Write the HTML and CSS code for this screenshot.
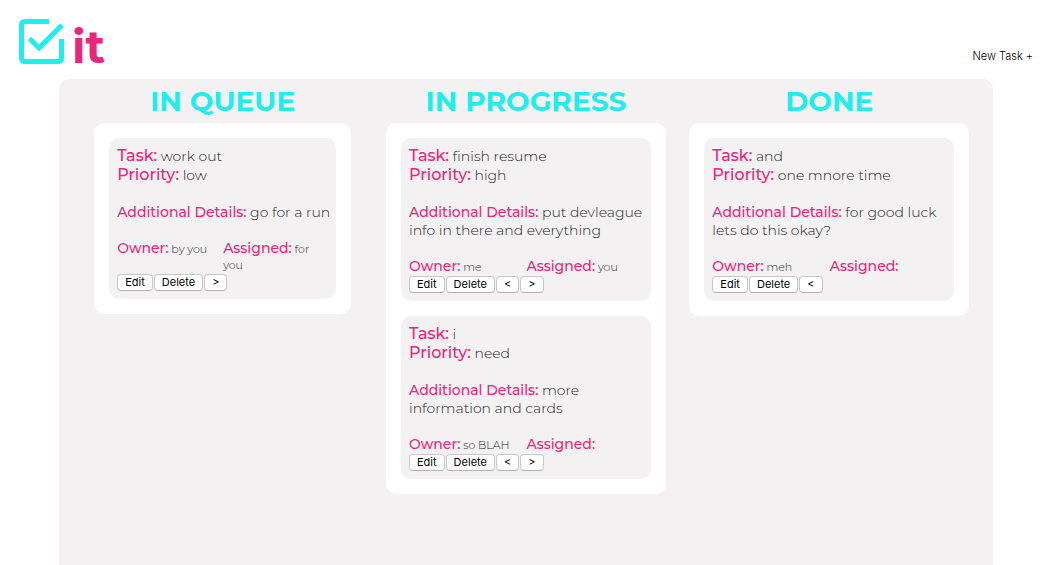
FILE: index.html
```html
<!DOCTYPE html>
<html lang="en">
<head>
<meta charset="utf-8">
<title>it</title>
<link rel="stylesheet" href="styles.css">
</head>
<body>
<header class="header">
  <a class="logo" href="#" aria-label="Check it">
    <svg class="logo-mark" viewBox="0 0 45 45" aria-hidden="true">
      <path d="M30 2.500H5.500a3 3 0 0 0-3 3v34a3 3 0 0 0 3 3h34a3 3 0 0 0 3-3V20" fill="none" stroke="#20edec" stroke-width="5"/>
      <path d="M10.500 19.500 20 29 43 6" fill="none" stroke="#20edec" stroke-width="5"/>
    </svg>
    <span class="logo-text">it</span>
  </a>
  <button class="new-task" type="button">New Task +</button>
</header>
<main class="board">
  <section class="column">
    <h1 class="title">IN QUEUE</h1>
    <div class="list list-narrow">
      <article class="card">
        <p class="line"><span class="label">Task:</span> work out</p>
        <p class="line"><span class="label">Priority:</span> low</p>
        <p class="details"><span class="label">Additional Details:</span> go for a run</p>
        <div class="people">
          <p class="person"><span class="label">Owner:</span> by you</p>
          <p class="person"><span class="label">Assigned:</span> for<br>you</p>
        </div>
        <div class="actions"><button class="btn" type="button">Edit</button><button class="btn" type="button">Delete</button><button class="btn" type="button">&gt;</button></div>
      </article>
    </div>
  </section>
  <section class="column">
    <h1 class="title">IN PROGRESS</h1>
    <div class="list">
      <article class="card">
        <p class="line"><span class="label">Task:</span> finish resume</p>
        <p class="line"><span class="label">Priority:</span> high</p>
        <p class="details"><span class="label">Additional Details:</span> put devleague info in there and everything</p>
        <div class="people">
          <p class="person"><span class="label">Owner:</span> me</p>
          <p class="person"><span class="label">Assigned:</span> you</p>
        </div>
        <div class="actions"><button class="btn" type="button">Edit</button><button class="btn" type="button">Delete</button><button class="btn" type="button">&lt;</button><button class="btn" type="button">&gt;</button></div>
      </article>
      <article class="card">
        <p class="line"><span class="label">Task:</span> i</p>
        <p class="line"><span class="label">Priority:</span> need</p>
        <p class="details"><span class="label">Additional Details:</span> more information and cards</p>
        <div class="people">
          <p class="person"><span class="label">Owner:</span> so BLAH</p>
          <p class="person"><span class="label">Assigned:</span></p>
        </div>
        <div class="actions"><button class="btn" type="button">Edit</button><button class="btn" type="button">Delete</button><button class="btn" type="button">&lt;</button><button class="btn" type="button">&gt;</button></div>
      </article>
    </div>
  </section>
  <section class="column">
    <h1 class="title">DONE</h1>
    <div class="list">
      <article class="card">
        <p class="line"><span class="label">Task:</span> and</p>
        <p class="line"><span class="label">Priority:</span> one mnore time</p>
        <p class="details"><span class="label">Additional Details:</span> for good luck lets do this okay?</p>
        <div class="people">
          <p class="person"><span class="label">Owner:</span> meh</p>
          <p class="person"><span class="label">Assigned:</span></p>
        </div>
        <div class="actions"><button class="btn" type="button">Edit</button><button class="btn" type="button">Delete</button><button class="btn" type="button">&lt;</button></div>
      </article>
    </div>
  </section>
</main>
</body>
</html>
```
FILE: styles.css
```css
* {
  box-sizing: border-box;
}

body {
  margin: 0;
  min-height: 100vh;
  display: flex;
  flex-direction: column;
  background: #fff;
  color: #222;
  font-family: Montserrat, Inter, sans-serif;
  font-weight: 300;
}

p,
h1 {
  margin: 0;
}

.header {
  display: flex;
  justify-content: space-between;
  align-items: flex-end;
  padding: 19px 19px 15px;
}

.logo {
  display: flex;
  align-items: flex-end;
  gap: 8px;
  text-decoration: none;
}

.logo-mark {
  width: 45px;
  height: 45px;
}

.logo-text {
  color: #e9267c;
  font-size: 45px;
  font-weight: 700;
  line-height: 34px;
}

.new-task {
  padding: 0;
  border: 0;
  background: none;
  color: #000;
  font: 300 11px/16px Inter, sans-serif;
}

.board {
  flex: 1;
  display: grid;
  grid-template-columns: repeat(3, 1fr);
  margin: 0 59px;
  padding: 0 12px;
  border-radius: 10px 10px 0 0;
  background: #f3f1f2;
}

.column {
  display: flex;
  flex-direction: column;
  align-items: center;
}

.title {
  color: #20edec;
  font-size: 28px;
  font-weight: 700;
  line-height: 44px;
}

.list {
  display: flex;
  flex-direction: column;
  gap: 15px;
  width: 100%;
  max-width: 280px;
  padding: 15px;
  border-radius: 10px;
  background: #fff;
}

.list-narrow {
  max-width: 257px;
}

.card {
  padding: 8px 7px 8px 8px;
  border-radius: 10px;
  background: #f3f1f2;
}

.label {
  color: #e9267c;
  font-weight: 500;
}

.line {
  font-size: 14px;
  line-height: 16px;
}

.line .label {
  font-size: 16px;
  line-height: 19px;
}

.details {
  margin: 19px -4px 18px 0;
  font-size: 14px;
  line-height: 18px;
}

.people {
  display: grid;
  grid-template-columns: 1fr 1fr;
}

.person {
  font-size: 11px;
  line-height: 16px;
}

.person .label {
  font-size: 14px;
  line-height: 18px;
}

.actions {
  display: flex;
  gap: 1px;
  padding-top: 1px;
}

.btn {
  height: 17px;
  padding: 0 7px;
  border: 1px solid #c8c8c8;
  border-bottom-color: #b0b0b0;
  border-radius: 4px;
  background: #fff;
  color: #000;
  font: 400 11px/15px Inter, sans-serif;
}
```
